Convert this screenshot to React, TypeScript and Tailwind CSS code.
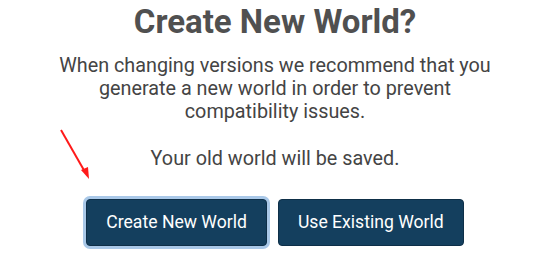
export default function App() {
  return (
    <div className="relative w-[550px] h-[267px] bg-white font-['Roboto',sans-serif] overflow-hidden">
      {/* red annotation arrow */}
      <svg className="absolute left-0 top-0" width="550" height="267" viewBox="0 0 550 267">
        <line x1="61" y1="130" x2="85" y2="172" stroke="#ff1a1a" strokeWidth="2" />
        <polygon points="89,179 81,170 88,167" fill="#ff1a1a" />
      </svg>

      <div className="flex flex-col items-center text-center pt-[2px]">
        <h1 className="text-[33px] leading-[40px] font-bold text-[#505050]">Create New World?</h1>
        <p className="mt-[12px] w-[460px] text-[19.8px] leading-[23px] text-[#444444]">
          When changing versions we recommend that you generate a new world in order to prevent
          compatibility issues.
        </p>
        <p className="mt-[24px] text-[19.8px] leading-[23px] text-[#444444]">Your old world will be saved.</p>

        <div className="mt-[29px] flex gap-[11px]">
          <button className="h-[47px] px-[19px] rounded-[4px] bg-[#143f5e] border border-[#0e2f48] text-white text-[17.6px] ring-[3px] ring-[#a9c8e8]">
            Create New World
          </button>
          <button className="h-[47px] px-[19px] rounded-[4px] bg-[#143f5e] border border-[#0e2f48] text-white text-[17.6px]">
            Use Existing World
          </button>
        </div>
      </div>
    </div>
  );
}
